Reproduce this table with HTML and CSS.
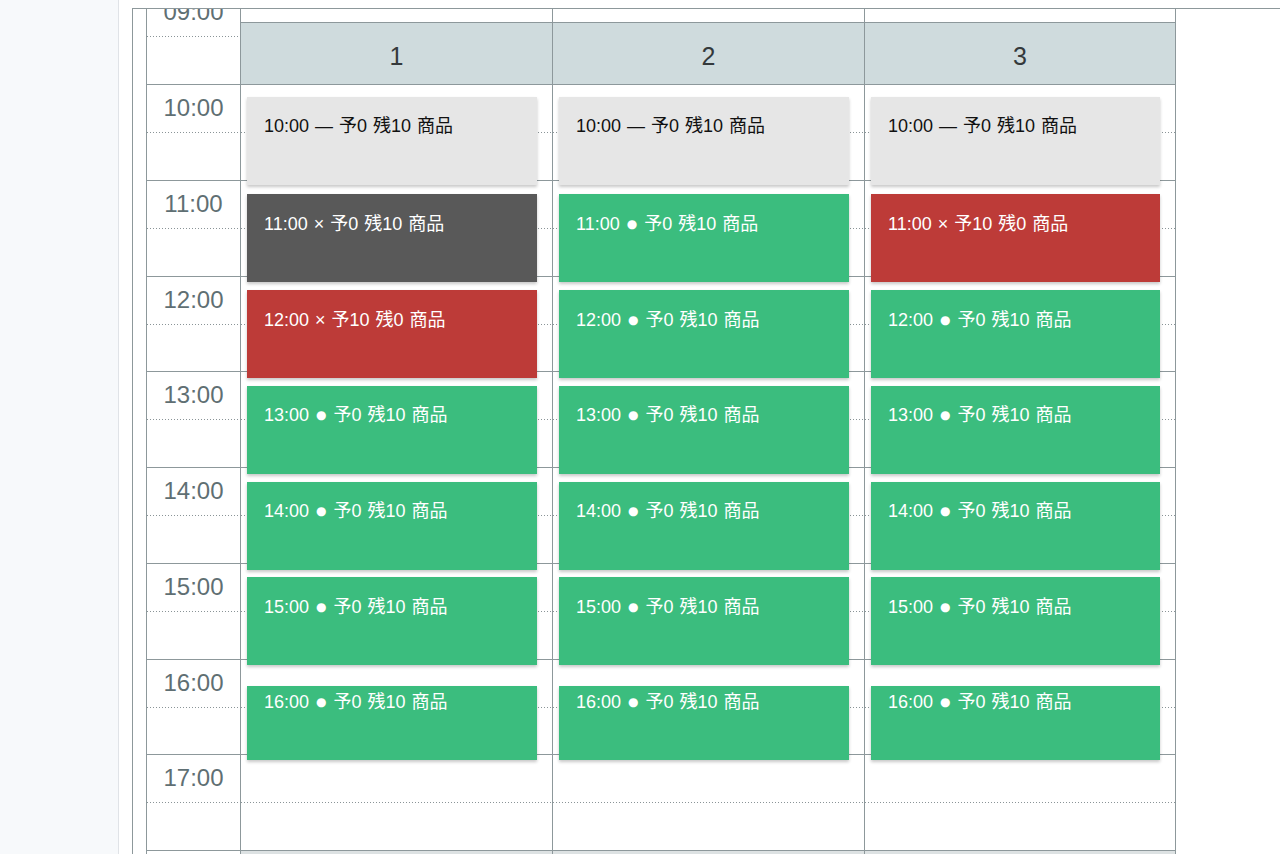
FILE: index.html
```html
<!DOCTYPE html>
<html lang="ja">
<head>
<meta charset="utf-8">
<title>Schedule</title>
<link rel="stylesheet" href="styles.css">
</head>
<body>
<div class="app">
  <aside class="sidebar"></aside>
  <main class="main">
    <div class="scroller">
      <div class="grid">
        <div class="timecol">
          <div class="slot"><div class="label">09:00</div></div>
          <div class="slot"><div class="label">10:00</div></div>
          <div class="slot"><div class="label">11:00</div></div>
          <div class="slot"><div class="label">12:00</div></div>
          <div class="slot"><div class="label">13:00</div></div>
          <div class="slot"><div class="label">14:00</div></div>
          <div class="slot"><div class="label">15:00</div></div>
          <div class="slot"><div class="label">16:00</div></div>
          <div class="slot"><div class="label">17:00</div></div>
          <div class="slot"></div>
        </div>

        <div class="daycol">
          <div class="spacer"></div>
          <div class="dayhead">1</div>
          <div class="slot"><div class="ev ev-empty ev-first">10:00 — 予0 残10 商品</div></div>
          <div class="slot"><div class="ev ev-closed">11:00 × 予0 残10 商品</div></div>
          <div class="slot"><div class="ev ev-full">12:00 × 予10 残0 商品</div></div>
          <div class="slot"><div class="ev ev-open">13:00 <span class="dot">●</span> 予0 残10 商品</div></div>
          <div class="slot"><div class="ev ev-open">14:00 <span class="dot">●</span> 予0 残10 商品</div></div>
          <div class="slot"><div class="ev ev-open">15:00 <span class="dot">●</span> 予0 残10 商品</div></div>
          <div class="slot"><div class="ev ev-open ev-last">16:00 <span class="dot">●</span> 予0 残10 商品</div></div>
          <div class="slot"></div>
          <div class="slot off"></div>
        </div>

        <div class="daycol">
          <div class="spacer"></div>
          <div class="dayhead">2</div>
          <div class="slot"><div class="ev ev-empty ev-first">10:00 — 予0 残10 商品</div></div>
          <div class="slot"><div class="ev ev-open">11:00 <span class="dot">●</span> 予0 残10 商品</div></div>
          <div class="slot"><div class="ev ev-open">12:00 <span class="dot">●</span> 予0 残10 商品</div></div>
          <div class="slot"><div class="ev ev-open">13:00 <span class="dot">●</span> 予0 残10 商品</div></div>
          <div class="slot"><div class="ev ev-open">14:00 <span class="dot">●</span> 予0 残10 商品</div></div>
          <div class="slot"><div class="ev ev-open">15:00 <span class="dot">●</span> 予0 残10 商品</div></div>
          <div class="slot"><div class="ev ev-open ev-last">16:00 <span class="dot">●</span> 予0 残10 商品</div></div>
          <div class="slot"></div>
          <div class="slot off"></div>
        </div>

        <div class="daycol daycol-last">
          <div class="spacer"></div>
          <div class="dayhead">3</div>
          <div class="slot"><div class="ev ev-empty ev-first">10:00 — 予0 残10 商品</div></div>
          <div class="slot"><div class="ev ev-full">11:00 × 予10 残0 商品</div></div>
          <div class="slot"><div class="ev ev-open">12:00 <span class="dot">●</span> 予0 残10 商品</div></div>
          <div class="slot"><div class="ev ev-open">13:00 <span class="dot">●</span> 予0 残10 商品</div></div>
          <div class="slot"><div class="ev ev-open">14:00 <span class="dot">●</span> 予0 残10 商品</div></div>
          <div class="slot"><div class="ev ev-open">15:00 <span class="dot">●</span> 予0 残10 商品</div></div>
          <div class="slot"><div class="ev ev-open ev-last">16:00 <span class="dot">●</span> 予0 残10 商品</div></div>
          <div class="slot"></div>
          <div class="slot off"></div>
        </div>
      </div>
    </div>
  </main>
</div>
</body>
</html>
```

FILE: styles.css
```css
* {
  box-sizing: border-box;
}

html, body {
  margin: 0;
  padding: 0;
  background: #ffffff;
}

body {
  font-family: "Liberation Sans", Arial, "Noto Sans CJK JP", sans-serif;
  color: #222;
}

.app {
  display: flex;
  width: 1280px;
  height: 854px;
  overflow: hidden;
}

.sidebar {
  flex: 0 0 119px;
  background: #f7f9fb;
  border-right: 1px solid #e0e3e7;
}

.main {
  flex: 1;
  padding: 8px 0 0 13px;
  display: flex;
  flex-direction: column;
  min-width: 0;
}

.scroller {
  flex: 1;
  border-top: 1px solid #8d989b;
  border-left: 1px solid #8d989b;
  padding-left: 13px;
  overflow: hidden;
}

.grid {
  display: flex;
  margin-top: -19.75px;
  align-items: flex-start;
}

.timecol {
  flex: 0 0 95px;
  border-left: 1px solid #8d989b;
  border-right: 1px solid #8d989b;
}

.daycol {
  flex: 0 0 312px;
  border-right: 1px solid #8d989b;
}

.daycol-last {
  flex-basis: 311px;
}

.slot {
  display: flow-root;
  height: 95.75px;
  border-bottom: 1px solid #8d989b;
  background-image: repeating-linear-gradient(90deg, #8a9497 0 1px, transparent 1px 3px);
  background-repeat: no-repeat;
  background-size: 100% 1px;
  background-position: 0 47px;
}

.slot.off {
  background-color: #dde2e3;
}

.label {
  padding-top: 9px;
  text-align: center;
  font-size: 24px;
  line-height: 27.6px;
  color: #5f6f73;
}

.spacer {
  height: 32.75px;
}

.dayhead {
  height: 63px;
  border-top: 1px solid #8d989b;
  border-bottom: 1px solid #8d989b;
  background: #cfdbdd;
  padding-top: 6px;
  text-align: center;
  font-size: 25px;
  line-height: 55px;
  color: #34393b;
}

.ev {
  margin: 13.5px 15px 0 6px;
  height: 88px;
  padding: 16.5px 17px 0;
  font-size: 18px;
  line-height: 27px;
  word-spacing: 1px;
  white-space: nowrap;
  color: #ffffff;
  box-shadow: 0 2px 3px rgba(0, 0, 0, 0.22);
}

.ev-first {
  margin-top: 11.75px;
  height: 88.5px;
}

.ev-last {
  margin-top: 26.25px;
  height: 74.25px;
  padding-top: 3.5px;
}

.ev-empty {
  background: #e6e6e6;
  color: #111111;
}

.ev-closed {
  background: #595959;
}

.ev-full {
  background: #bd3b38;
}

.ev-open {
  background: #3bbd7e;
}

.dot {
  font-family: "DejaVu Sans", sans-serif;
  font-size: 12px;
  vertical-align: 2px;
  padding: 0 1px;
}
```
